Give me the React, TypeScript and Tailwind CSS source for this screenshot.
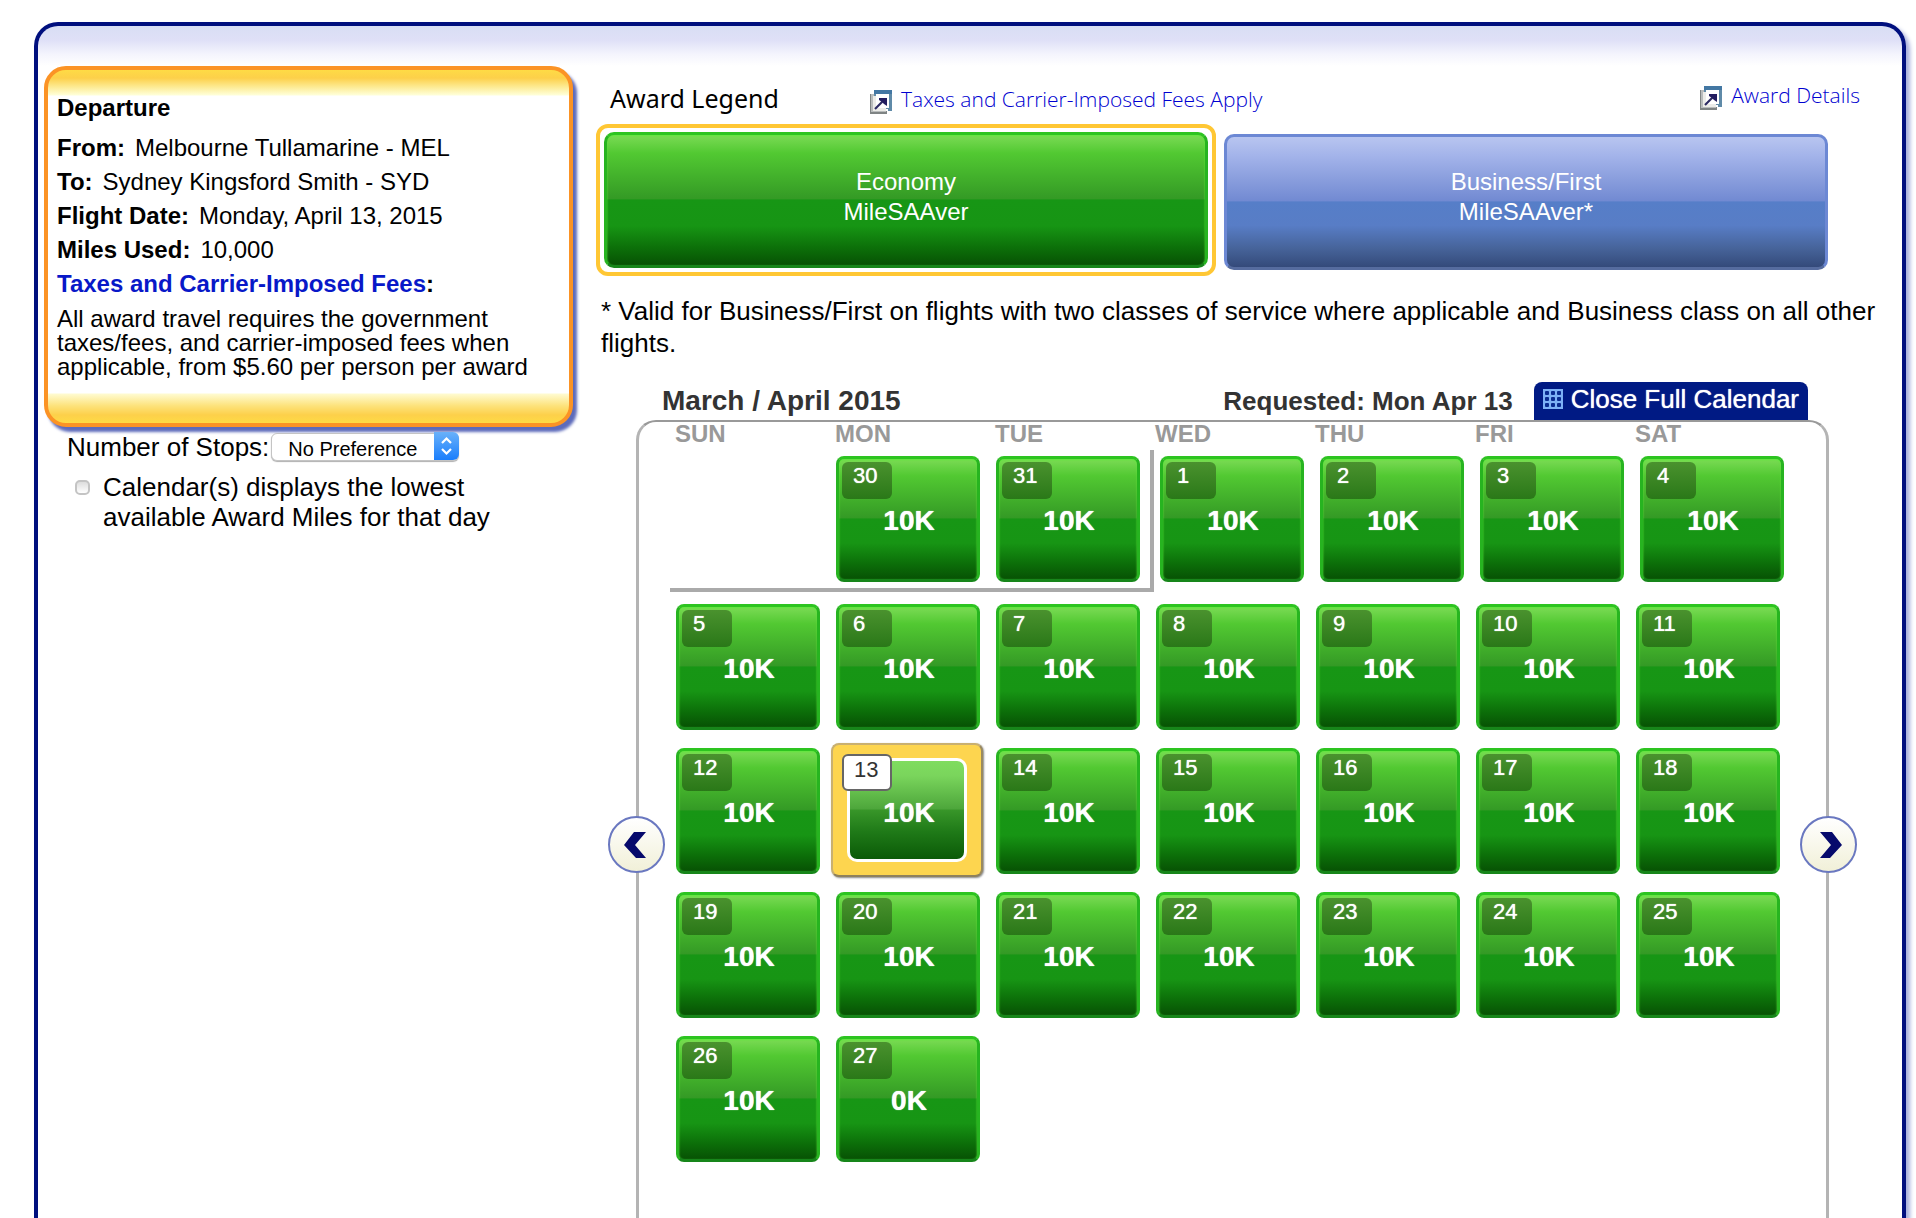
import clsx from "clsx";

type Day = { date: number; miles: string; selected?: boolean };

const weekdays = ["SUN", "MON", "TUE", "WED", "THU", "FRI", "SAT"];

const day = (date: number): Day => ({
  date,
  miles: date === 27 ? "0K" : "10K",
  selected: date === 13,
});

const firstWeek: (Day | null)[] = [null, ...[30, 31, 1, 2, 3, 4].map(day)];

const otherWeeks: (Day | null)[][] = [
  [5, 6, 7, 8, 9, 10, 11].map(day),
  [12, 13, 14, 15, 16, 17, 18].map(day),
  [19, 20, 21, 22, 23, 24, 25].map(day),
  [day(26), day(27), null, null, null, null, null],
];

const greenTile =
  "border-[3px] border-t-[#2dc420] border-x-[#27b420] border-b-[#17861a] bg-[linear-gradient(180deg,#7bdb55_0%,#52c932_14%,#349a25_49%,#179615_50%,#179514_70%,#0c6f09_87%,#075204_100%)] shadow-[inset_0_1px_2px_#5fe83c]";

function PopupIcon() {
  return (
    <svg width="22" height="24" viewBox="0 0 22 24" aria-hidden="true" className="shrink-0">
      <path d="M0 4h3v17h14v3H0z" fill="#7f8484" />
      <path d="M1 4h3v16h12v2H1z" fill="#b9bcbc" />
      <path d="M4 0h18v21h-4v-2H4z" fill="#5f8aa8" />
      <path d="M4 0h18v4H4z" fill="#4377a3" />
      <path d="M3 6h3v12h10v3H3z" fill="#ecece8" />
      <path d="M6 4h13v14H6z" fill="#fff" />
      <path d="M5 19 14 10" stroke="#2c2a62" strokeWidth="2.200" />
      <path d="M9 8h8v8l-3-2-2-2-3-2z" fill="#231d60" />
    </svg>
  );
}

function GridIcon() {
  return (
    <svg width="20" height="20" viewBox="0 0 20 20" aria-hidden="true" className="shrink-0">
      <rect width="20" height="20" fill="#7db0f5" />
      {[2, 8, 14].map((x) =>
        [2, 8, 14].map((y) => (
          <rect key={`${x}-${y}`} x={x} y={y} width="4" height="4" rx="1" fill="#0a2a90" />
        ))
      )}
    </svg>
  );
}

function NavButton({ direction }: { direction: "left" | "right" }) {
  const left = direction === "left";
  return (
    <button
      type="button"
      aria-label={left ? "Previous dates" : "Next dates"}
      className={clsx(
        "absolute top-[394px] flex size-[57px] items-center justify-center rounded-full border-2 border-[#6a78c0] bg-[linear-gradient(180deg,#ffffff,#f1f0d8)]",
        left ? "-left-[31px] pr-1" : "-right-[31px] pl-1"
      )}
    >
      <svg width="22" height="26" viewBox="0 0 22 26" aria-hidden="true">
        {left ? (
          <path d="M10 0h12L11 13l11 13H12L0 13z" fill="#060a6c" />
        ) : (
          <path d="M12 0H0l11 13L0 26h10l12-13z" fill="#060a6c" />
        )}
      </svg>
    </button>
  );
}

function DayButton({ date, miles, selected }: Day) {
  return (
    <button
      type="button"
      aria-pressed={!!selected}
      className={clsx(
        "relative flex h-[126px] w-full items-center justify-center rounded-lg pt-1 pl-[2px]",
        !selected && greenTile
      )}
    >
      {selected && (
        <span className="absolute -top-[5px] -right-[3px] -bottom-[3px] -left-[5px] rounded-lg border-2 border-t-[#c9b070] border-r-[#9a8a60] border-b-[#8f815c] border-l-[#c9b070] bg-[#fdd54f] shadow-[1px_1px_2px_#888888]">
          <span className="absolute inset-x-[14px] inset-y-[13px] rounded-[10px] border-[3px] border-white bg-[linear-gradient(180deg,#7fdc5f_0%,#7ad55c_15%,#4da63b_49%,#389629_50%,#1f7a18_72%,#0b5a07_100%)]" />
        </span>
      )}
      <span
        className={clsx(
          "absolute h-[37px] w-[50px] rounded-md text-left text-[22px] leading-[28px]",
          selected
            ? "top-[6px] left-[6px] border-2 border-[#666666] bg-white pl-[10px] leading-[25px] text-[#333333]"
            : "top-[3px] left-[3px] bg-[linear-gradient(180deg,#4a922e,#2a7818)] pl-[11px] text-white [text-shadow:0_0_1px_#ffffff]"
        )}
      >
        {date}
      </span>
      <span className="relative text-[28px] leading-8 font-bold text-white [text-shadow:0_0_1px_#ffffff]">
        {miles}
      </span>
    </button>
  );
}

function DepartureCard() {
  const details = [
    { label: "From:", value: "Melbourne Tullamarine - MEL" },
    { label: "To:", value: "Sydney Kingsford Smith - SYD" },
    { label: "Flight Date:", value: "Monday, April 13, 2015" },
    { label: "Miles Used:", value: "10,000" },
  ];

  return (
    <section className="rounded-[22px] border-4 border-[#fb9325] bg-white bg-[linear-gradient(180deg,#fedb45_0px,#fdd04a_8px,#fdeb94_17px,#ffffd8_25px,transparent_26px),linear-gradient(0deg,#fedb45_0px,#fdd04a_8px,#fde27a_17px,#fffbd0_29px,transparent_30px)] px-[9px] pt-[21px] pb-[44px] text-2xl shadow-[4px_5px_3px_#5d6bbb]">
      <h2 className="mb-[6px] leading-[34px] font-bold">Departure</h2>
      {details.map((item) => (
        <p key={item.label} className="leading-[34px]">
          <strong className="mr-[10px]">{item.label}</strong>
          {item.value}
        </p>
      ))}
      <p className="leading-[34px] font-bold">
        <a href="#fees" className="text-[#0818c8]">
          Taxes and Carrier-Imposed Fees
        </a>
        :
      </p>
      <p className="mt-[6px] leading-6">
        All award travel requires the government taxes/fees, and carrier-imposed fees when applicable, from $5.60 per
        person per award
      </p>
    </section>
  );
}

function Filters() {
  return (
    <div className="pl-[23px] text-[26px] leading-[30px]">
      <div className="mt-[5px] flex items-center gap-[2px]">
        <label htmlFor="stops">Number of Stops:</label>
        <div className="relative">
          <select
            id="stops"
            className="h-7 w-[188px] appearance-none rounded-md border border-[#c4c4c4] bg-white pt-1 pl-4 text-xl leading-[22px] shadow-[0_1px_1px_#b0b0b0]"
          >
            <option>No Preference</option>
          </select>
          <svg
            width="25"
            height="28"
            viewBox="0 0 25 28"
            aria-hidden="true"
            className="pointer-events-none absolute top-0 right-0 rounded-r-md bg-[linear-gradient(180deg,#69b1fa,#1a7efc)]"
          >
            <path d="M8 11l4.500-4.500L17 11M8 17l4.500 4.500L17 17" fill="none" stroke="#fff" strokeWidth="2.200" />
          </svg>
        </div>
      </div>
      <div className="mt-[10px] flex items-start gap-[13px] pl-2">
        <input
          id="lowest"
          type="checkbox"
          className="mt-2 size-[15px] shrink-0 appearance-none rounded-[5px] border-2 border-[#c4c4c4] bg-[linear-gradient(180deg,#dddddd,#ffffff)]"
        />
        <label htmlFor="lowest" className="max-w-[400px]">
          Calendar(s) displays the lowest available Award Miles for that day
        </label>
      </div>
    </div>
  );
}

function AwardLegend() {
  return (
    <section>
      <div className="flex items-start justify-between pr-[42px] pl-[14px] font-['Open_Sans',sans-serif] text-[21px] leading-[30px] font-light">
        <div className="flex items-start pt-[58px]">
          <h1 className="w-[260px] font-['Noto_Sans',sans-serif] text-[25px] leading-[28px] font-normal">
            Award Legend
          </h1>
          <a href="#taxes" className="flex items-end gap-[9px] text-[#0000d0]">
            <PopupIcon />
            <span>Taxes and Carrier-Imposed Fees Apply</span>
          </a>
        </div>
        <a href="#details" className="flex items-end gap-[9px] pt-[54px] text-[#0000d0]">
          <PopupIcon />
          <span>Award Details</span>
        </a>
      </div>
      <div className="mt-[10px] grid grid-cols-2 pr-[66px] text-2xl leading-[30px] text-white [text-shadow:0_0_1px_#ffffff]">
        <div className="rounded-xl border-4 border-[#ffc734] p-1">
          <button type="button" className={clsx("h-[136px] w-full rounded-[10px] pb-[6px]", greenTile)}>
            Economy
            <br />
            MileSAAver
          </button>
        </div>
        <div className="px-2 pt-[10px]">
          <button
            type="button"
            className="h-[136px] w-full rounded-[10px] border-[3px] border-[#6c88d4] border-b-[#566c9f] bg-[linear-gradient(180deg,#b8c5f0_0%,#a4b4ea_14%,#728ad2_49%,#567ec8_50%,#587dc6_68%,#466399_86%,#344a7a_100%)] pb-[10px]"
          >
            Business/First
            <br />
            MileSAAver*
          </button>
        </div>
      </div>
      <p className="mt-[19px] pr-5 pl-[5px] text-[26px] leading-8">
        * Valid for Business/First on flights with two classes of service where applicable and Business class on all
        other flights.
      </p>
    </section>
  );
}

function Calendar() {
  return (
    <section className="mt-[23px] mr-[73px] ml-10 flex flex-1 flex-col">
      <header className="flex items-start pr-[21px] pl-[26px] leading-[38px]">
        <h2 className="flex-1 text-[28px] font-bold text-[#333333]">March / April 2015</h2>
        <p className="mr-[21px] text-[26px] font-bold text-[#333333]">Requested: Mon Apr 13</p>
        <button
          type="button"
          className="flex h-[38px] items-center gap-2 rounded-t-lg bg-[#001a84] px-[9px] pb-1 text-[26px] leading-[34px] text-white [text-shadow:0_0_1px_#ffffff]"
        >
          <GridIcon />
          Close Full Calendar
        </button>
      </header>
      <div className="relative flex-1 rounded-t-[20px] border-x-[3px] border-t-2 border-x-[#b4b4b4] border-t-[#999999] pr-9 pl-[31px]">
        <table className="w-full table-fixed border-separate border-spacing-0">
          <thead>
            <tr>
              {weekdays.map((name) => (
                <th key={name} className="p-0 pb-1 pl-[5px] text-left text-2xl leading-6 font-bold text-[#999999]">
                  {name}
                </th>
              ))}
            </tr>
          </thead>
          <tbody>
            {/* the grey rule separates March from April */}
            <tr>
              {firstWeek.map((item, i) => (
                <td
                  key={i}
                  className={clsx(
                    "p-0 pt-[6px] align-top",
                    i < 3 && "border-b-4 border-[#aaaaaa] pr-[10px] pb-[6px] pl-[6px]",
                    i === 3 && "border-l-4 border-[#aaaaaa] px-[6px]",
                    i > 3 && "pr-[6px] pl-[10px]"
                  )}
                >
                  {item && <DayButton {...item} />}
                </td>
              ))}
            </tr>
            {otherWeeks.map((week, w) => (
              <tr key={w}>
                {week.map((item, i) => (
                  <td key={i} className="p-0 pt-3 pr-[10px] pb-[6px] pl-[6px]">
                    {item && <DayButton {...item} />}
                  </td>
                ))}
              </tr>
            ))}
          </tbody>
        </table>
        <NavButton direction="left" />
        <NavButton direction="right" />
      </div>
    </section>
  );
}

export default function App() {
  return (
    <main className="flex min-h-screen flex-col bg-white pt-[22px] pr-[10px] pl-[34px] font-['Liberation_Sans',Arial,sans-serif] text-black">
      <div className="flex flex-1 rounded-t-[24px] border-x-4 border-t-4 border-[#000f7e] bg-[linear-gradient(180deg,#d8def4_0px,#dfe0f7_14px,#f4f4fd_28px,#ffffff_40px)] shadow-[4px_4px_4px_#a9b0dc]">
        <aside className="ml-[6px] w-[529px] shrink-0 pt-10">
          <DepartureCard />
          <Filters />
        </aside>
        <div className="ml-[23px] flex min-w-0 flex-1 flex-col">
          <AwardLegend />
          <Calendar />
        </div>
      </div>
    </main>
  );
}
